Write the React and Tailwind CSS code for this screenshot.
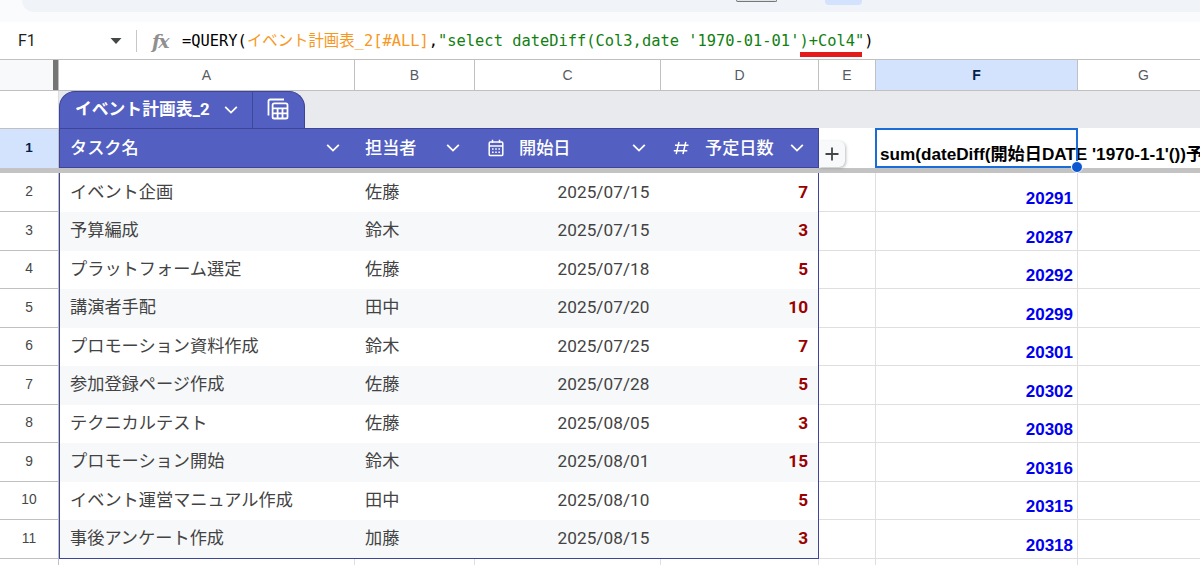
import clsx from 'clsx'

const rows = [
  { n: 2, task: 'イベント企画', owner: '佐藤', date: '2025/07/15', days: 7, sum: 20291, h: 'h-[39px]' },
  { n: 3, task: '予算編成', owner: '鈴木', date: '2025/07/15', days: 3, sum: 20287, h: 'h-[39px]' },
  { n: 4, task: 'プラットフォーム選定', owner: '佐藤', date: '2025/07/18', days: 5, sum: 20292, h: 'h-[38px]' },
  { n: 5, task: '講演者手配', owner: '田中', date: '2025/07/20', days: 10, sum: 20299, h: 'h-[39px]' },
  { n: 6, task: 'プロモーション資料作成', owner: '鈴木', date: '2025/07/25', days: 7, sum: 20301, h: 'h-[38px]' },
  { n: 7, task: '参加登録ページ作成', owner: '佐藤', date: '2025/07/28', days: 5, sum: 20302, h: 'h-[39px]' },
  { n: 8, task: 'テクニカルテスト', owner: '佐藤', date: '2025/08/05', days: 3, sum: 20308, h: 'h-[38px]' },
  { n: 9, task: 'プロモーション開始', owner: '鈴木', date: '2025/08/01', days: 15, sum: 20316, h: 'h-[39px]' },
  { n: 10, task: 'イベント運営マニュアル作成', owner: '田中', date: '2025/08/10', days: 5, sum: 20315, h: 'h-[38px]' },
  { n: 11, task: '事後アンケート作成', owner: '加藤', date: '2025/08/15', days: 3, sum: 20318, h: 'h-[39px]' },
]

const columns = [
  { name: 'A', width: 'w-[296px]' },
  { name: 'B', width: 'w-[120px]' },
  { name: 'C', width: 'w-[186px]' },
  { name: 'D', width: 'w-[158px]' },
  { name: 'E', width: 'w-[57px]' },
  { name: 'F', width: 'w-[202px]' },
  { name: 'G', width: 'w-[132px]' },
]

const sans = 'font-["Roboto","Noto_Sans_CJK_JP",sans-serif]'
const arial = 'font-["Liberation_Sans","Noto_Sans_CJK_JP",sans-serif]'

function Chevron({ className }) {
  return (
    <svg viewBox="0 0 14 10" className={clsx('h-[10px] w-[14px] shrink-0', className)} fill="none" stroke="currentColor" strokeWidth="1.8">
      <path d="M1.2 1.8 7 7.6l5.8-5.8" />
    </svg>
  )
}

function TableIcon() {
  return (
    <svg viewBox="0 0 22 22" className="h-[22px] w-[22px]" fill="none" stroke="currentColor" strokeWidth="1.8">
      <path d="M1.5 17.5V3.2c0-1 .7-1.7 1.7-1.7H17" />
      <rect x="5.6" y="5.4" width="14.9" height="15.1" rx="1.6" />
      <path d="M5.6 10.4h14.9M5.6 15.4h14.9M10.6 10.4v10M15.5 10.4v10" />
    </svg>
  )
}

function CalendarIcon() {
  return (
    <svg viewBox="0 0 16 18" className="h-[18px] w-4 shrink-0" fill="none" stroke="currentColor" strokeWidth="1.5">
      <rect x="1.2" y="3" width="13.6" height="13.6" rx="1.2" />
      <path d="M1.2 7h13.6M4.5 .8V4M11.5 .8V4" />
      <path d="M4 10h1.6M7.2 10h1.6M10.4 10H12M4 13.3h1.6M7.2 13.3h1.6M10.4 13.3H12" />
    </svg>
  )
}

function HashIcon() {
  return (
    <svg viewBox="0 0 16 14" className="h-[14px] w-4 shrink-0" fill="none" stroke="currentColor" strokeWidth="1.5">
      <path d="M2 4.3h13.5M.8 9.7h13.5M6 .8 3.2 13.2M12.8.8 10 13.2" />
    </svg>
  )
}

function Toolbar() {
  return (
    <div className="h-[22px] bg-[#f9fbfd]">
      <div className="ml-[22px] flex h-3 items-start rounded-bl-[24px] bg-[#f0f3f8]">
        <div className="ml-[714px] h-[2px] w-[41px] rounded-b-sm border-x border-b border-[#747775] bg-[#dde3e8]" />
        <div className="ml-[48px] h-[5px] w-[37px] rounded-b bg-[#d3e3fd]" />
      </div>
    </div>
  )
}

function FormulaBar() {
  return (
    <div className="flex h-[38px] items-center border-b border-[#c0c0c0] bg-white">
      <span className={clsx('w-[110px] pl-[18px] text-base text-[#1f1f1f]', sans)}>F1</span>
      <svg viewBox="0 0 12 6" className="h-[6px] w-3 fill-[#444746]">
        <path d="M.5 0h11L6 6z" />
      </svg>
      <div className="ml-[14px] h-[22px] w-px bg-[#c7c7c7]" />
      <span className="ml-[14px] w-[31px] pt-[2px] pl-px font-['DejaVu_Serif',serif] text-[19px] leading-none font-bold tracking-[-2px] text-[#8f8f8f] italic">fx</span>
      <div className="relative pt-[2px] font-['DejaVu_Sans_Mono','Noto_Sans_CJK_JP',monospace] text-[15.4px] whitespace-pre text-black">
        <span>=QUERY(</span>
        <span className="text-[#f7981d]">イベント計画表_2[#ALL]</span>
        <span>,</span>
        <span className="text-[#118011]">"select dateDiff(Col3,date '1970-01-01')+Col4"</span>
        <span>)</span>
        <div className="absolute top-[24px] left-[618px] h-[5px] w-[62px] bg-[#e31b1b]" />
      </div>
    </div>
  )
}

function ColumnHeaders() {
  return (
    <div className={clsx('flex h-[31px] text-sm text-[#575b5f]', arial)}>
      <div className="w-[59px] shrink-0 border-r border-b border-[#c0c0c0] bg-[#f8f9fa]">
        <div className="ml-auto h-full w-[5px] bg-[#757575]" />
      </div>
      {columns.map((c) => (
        <div
          key={c.name}
          className={clsx(
            'flex shrink-0 items-center justify-center border-r border-b border-[#c0c0c0]',
            c.width,
            c.name === 'F' && 'bg-[#d3e3fd] font-bold text-[#041e49]',
          )}
        >
          {c.name}
        </div>
      ))}
    </div>
  )
}

function TableTab() {
  return (
    <div className="flex h-[37px]">
      <div className="w-[59px] shrink-0 border-r border-[#dadce0]" />
      <div className="flex grow bg-[#e8eaed]">
        <div className={clsx('flex w-[246px] rounded-t-[16px] border border-b-0 border-[#3c4598] bg-[#535fc1] text-white', sans)}>
          <div className="flex w-[193px] items-center border-r border-[#3f4899] pl-[15px]">
            <span className="w-[149px] pb-px text-[16.8px] font-bold">イベント計画表_2</span>
            <Chevron />
          </div>
          <div className="flex grow items-center justify-center pr-px pb-[2px]">
            <TableIcon />
          </div>
        </div>
      </div>
    </div>
  )
}

function HeaderRow() {
  return (
    <div className="flex h-[40px]">
      <div className={clsx('flex w-[59px] shrink-0 items-center justify-center border-t border-r border-[#c0c0c0] bg-[#d3e3fd] text-[13.5px] font-bold text-[#041e49]', arial)}>
        1
      </div>
      <div className={clsx('flex w-[760px] shrink-0 items-center border border-[#3c4598] bg-[#535fc1] pt-px text-[17.15px] font-medium text-white', sans)}>
        <div className="flex w-[295px] items-center pl-[10px]">
          <span className="w-[256px]">タスク名</span>
          <Chevron />
        </div>
        <div className="flex w-[120px] items-center pl-[10px]">
          <span className="w-[81px]">担当者</span>
          <Chevron />
        </div>
        <div className="flex w-[186px] items-center pl-[13px]">
          <CalendarIcon />
          <span className="ml-[15px] w-[113px]">開始日</span>
          <Chevron />
        </div>
        <div className="flex grow items-center pl-[12px]">
          <HashIcon />
          <span className="ml-[16px] w-[85px]">予定日数</span>
          <Chevron />
        </div>
      </div>
      <div className="flex w-[56px] shrink-0 items-end">
        <div className="mb-px flex h-[26px] w-[26px] items-center justify-center rounded-r-md bg-[#f8f9fa] text-[#444746] shadow-[1px_1px_3px_rgba(60,64,67,0.35)]">
          <svg viewBox="0 0 14 14" className="h-[14px] w-[14px]" stroke="currentColor" strokeWidth="1.8">
            <path d="M7 .5v13M.5 7h13" />
          </svg>
        </div>
      </div>
      <div className="relative w-[203px] shrink-0 border-2 border-[#1a6dd6]">
        <p className={clsx('mt-[12px] ml-[3px] text-[17.15px] leading-6 font-bold whitespace-nowrap text-black', arial)}>
          sum(dateDiff(開始日DATE '1970-1-1'())予
        </p>
        <div className="absolute inset-y-[-2px] right-[-2px] w-[2px] bg-[#1a6dd6]" />
        <div className="absolute right-[-7px] bottom-[-7px] z-10 h-3 w-3 rounded-full border border-white bg-[#0b57d0]" />
      </div>
    </div>
  )
}

function DataRow({ row, striped, last }) {
  const line = 'border-b border-[#dfdfdf]'
  return (
    <div className={clsx('flex', row.h)}>
      <div className={clsx('flex w-[59px] shrink-0 items-center justify-center border-r border-b border-[#c0c0c0] text-[13.8px] text-[#444746]', arial)}>
        {row.n}
      </div>
      <div
        className={clsx(
          'flex w-[760px] shrink-0 items-center border-x border-[#3c4598] text-[17.2px] text-[#434343]',
          sans,
          striped && 'bg-[#f6f8f9]',
          striped && !last && 'pb-[2px]',
          last && 'border-b',
        )}
      >
        <span className="w-[295px] pl-[10px]">{row.task}</span>
        <span className="w-[120px] pl-[10px]">{row.owner}</span>
        <span className="w-[186px] pr-[11.5px] text-right tracking-[0.05px]">{row.date}</span>
        <span className="grow pr-[10px] text-right font-bold text-[#990000]">{row.days}</span>
      </div>
      <div className={clsx('w-[57px] shrink-0 border-r', line)} />
      <div className={clsx('flex w-[202px] shrink-0 items-end justify-end border-r pr-1 text-[17px] leading-6 font-bold text-[#0000f0]', line, arial)}>
        {row.sum}
      </div>
      <div className={clsx('grow', line)} />
    </div>
  )
}

export default function App() {
  return (
    <div className="h-[565px] w-[1200px] overflow-hidden bg-white">
      <Toolbar />
      <FormulaBar />
      <ColumnHeaders />
      <TableTab />
      <HeaderRow />
      <div className="h-[5px] bg-[#c3c3c3]" />
      {rows.map((row, i) => (
        <DataRow key={row.n} row={row} striped={i % 2 === 1} last={i === rows.length - 1} />
      ))}
      <div className="flex h-[6px]">
        <div className="w-[59px] shrink-0 border-r border-[#c0c0c0]" />
        {columns.map((c) => (
          <div key={c.name} className={clsx('shrink-0 border-r border-[#dfdfdf]', c.width)} />
        ))}
      </div>
    </div>
  )
}
